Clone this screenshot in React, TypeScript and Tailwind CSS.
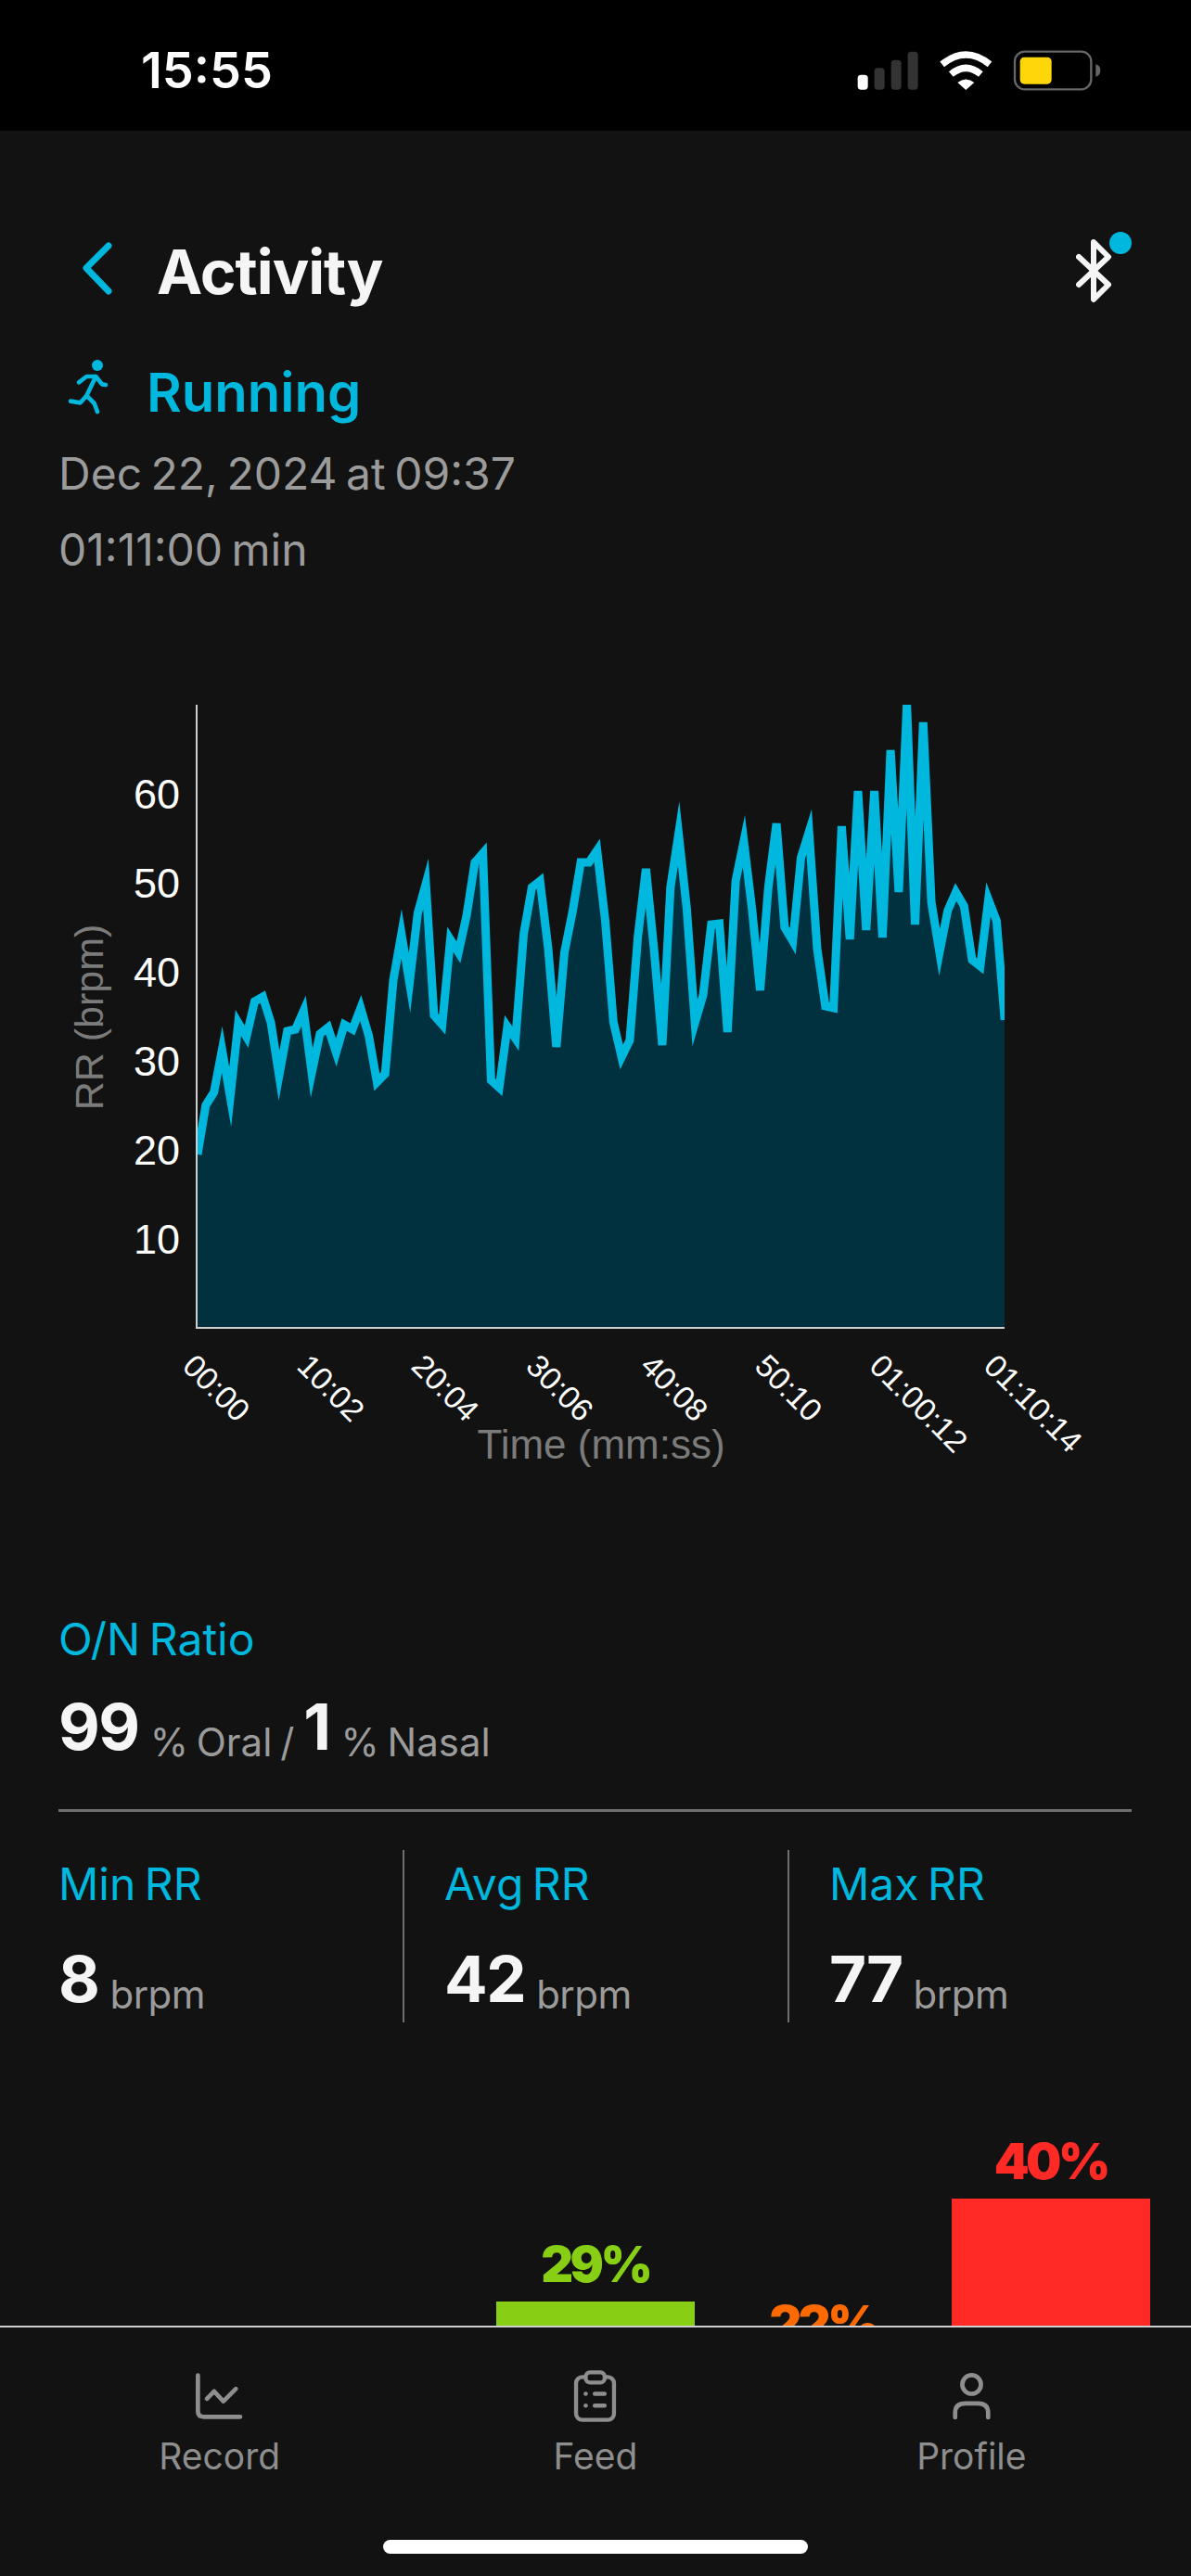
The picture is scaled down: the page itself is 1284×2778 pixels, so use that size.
const L=[1245,1192,1178,1132,1183,1103,1118,1080,1075,1103,1160,1112,1110,1090,1157,1115,1108,1135,1105,1110,1087,1117,1167,1158,1057,1007,1060,985,953,1095,1105,1013,1027,987,930,920,1165,1173,1107,1120,1007,957,950,1023,1129,1027,983,930,930,917,993,1102,1140,1122,1010,937,1025,1127,957,899,980,1103,1073,997,996,1113,950,907,980,1068,957,888,1000,1015,925,897,1023,1085,1087,891,1013,853,1003,853,1011,809,962,760,997,779,973,1027,982,962,977,1035,1042,970,993,1100];
const X0 = 213, DX = 8.79;
const pts = L.map((y, i) => `${(X0 + DX * i).toFixed(1)},${y}`).join(" ");
const ticks = ["00:00", "10:02", "20:04", "30:06", "40:08", "50:10", "01:00:12", "01:10:14"];
const yTicks = [60, 50, 40, 30, 20, 10];

function StatusIcons() {
  return (
    <svg className="w-[265px] h-[44px]" viewBox="130 100 795 132">
      <rect x="135" y="180" width="33" height="48" rx="11" fill="#fff" />
      <rect x="189" y="158" width="33" height="70" rx="11" fill="#333" />
      <rect x="243" y="132" width="33" height="96" rx="11" fill="#333" />
      <rect x="297" y="105" width="33" height="123" rx="11" fill="#333" />
      <path d="M408 146 Q485 84 562 146" fill="none" stroke="#fff" strokeWidth="22" />
      <path d="M437 178 Q485 138 533 178" fill="none" stroke="#fff" strokeWidth="22" />
      <path d="M458 205 Q485 184 512 205 L485 229 Z" fill="#fff" />
      <rect x="643" y="105" width="247" height="122" rx="32" fill="none" stroke="#666" strokeWidth="7" />
      <rect x="660" y="123" width="102" height="87" rx="14" fill="#ffd60a" />
      <path d="M905 146 Q920 150 920 166 Q920 182 905 186 Z" fill="#666" />
    </svg>
  );
}

function Sub({ children }: { children: React.ReactNode }) {
  return <span className="text-[42px] leading-none text-[#9b9b9b] [word-spacing:-3px]">{children}</span>;
}
function Big({ children }: { children: React.ReactNode }) {
  return <span className="text-[69px] leading-[76px] tracking-[-1.5px] font-bold text-[#f5f5f5]">{children}</span>;
}
function Stat({ label, value, cls }: { label: string; value: string; cls: string }) {
  return (
    <div className={cls}>
      <div className="text-[48px] leading-[60px] text-[#00b8de] [word-spacing:-4px]">{label}</div>
      <div className="mt-[34px] flex items-end gap-[12px]">
        <Big>{value}</Big>
        <span className="tracking-[-0.5px]"><Sub>brpm</Sub></span>
      </div>
    </div>
  );
}
function Bar({ label, color, text, h }: { label?: string; color?: string; text?: string; h?: string }) {
  return (
    <div className="w-[213.5px] shrink-0 flex flex-col items-center">
      {label && <div className={`text-[54px] leading-[54px] font-black tracking-[-3.5px] mb-[13px] ${text}`}>{label}</div>}
      {h && <div className={`w-full ${h} ${color}`} />}
    </div>
  );
}
function Tab({ label, children }: { label: string; children: React.ReactNode }) {
  return (
    <div className="flex flex-col items-center">
      {children}
      <div className="mt-[13px] text-[39px] leading-[48px] text-[#8e8e8e]">{label}</div>
    </div>
  );
}

export default function App() {
  return (
    <div className="w-[1284px] h-[2778px] bg-[#121212] flex flex-col overflow-hidden font-['Inter',sans-serif]">
      <div className="h-[141px] shrink-0 bg-black flex items-center justify-between pl-[152px] pr-[96px] pt-[11px]">
        <span className="text-white text-[54px] leading-none font-semibold">15:55</span>
        <StatusIcons />
      </div>

      <main className="flex-1 min-h-0 overflow-hidden pt-[109px]">
        <div className="pl-[63px] pr-[64px]">
          <div className="h-[80px] flex items-center">
            <svg className="w-[40px] h-[68px] ml-[22px]" viewBox="85 265 40 68">
              <path d="M117 274 L93 298 L117 323" fill="none" stroke="#00b8de" strokeWidth="7" strokeLinecap="round" strokeLinejoin="round" />
            </svg>
            <h1 className="ml-[44px] pt-[6px] text-[66px] leading-[80px] font-bold tracking-[-1px] text-[#f5f5f5]">Activity</h1>
            <svg className="ml-auto w-[60px] h-[80px]" viewBox="1160 250 60 80">
              <path d="M1163 277 L1195 307 L1179 323 L1179 261 L1195 277 L1163 307" fill="none" stroke="#f5f5f5" strokeWidth="6" strokeLinecap="round" strokeLinejoin="round" />
              <circle cx="1208" cy="262" r="12" fill="#00b8de" />
            </svg>
          </div>
          <div className="mt-[55px] h-[65px] flex items-start">
            <svg className="ml-[7px] w-[50px] h-[65px]" viewBox="30 405 150 195">
              <circle cx="135" cy="432" r="18" fill="#00b8de" />
              <path d="M75 487 L100 468 L130 468 L150 493 L162 495 M130 468 L100 530 L80 553 L48 548 M100 530 L125 555 L135 582" fill="none" stroke="#00b8de" strokeWidth="14" strokeLinecap="round" strokeLinejoin="round" />
            </svg>
            <div className="ml-[38px] mt-[6px] text-[58px] leading-[65px] font-semibold text-[#00b8de]">Running</div>
          </div>
          <div className="mt-[20px] text-[48px] leading-[82px] text-[#9b9b9b] [word-spacing:-4px]">
            <div>Dec 22, 2024 at 09:37</div>
            <div>01:11:00 min</div>
          </div>
        </div>

        <svg className="block w-[1284px] h-[966px]" viewBox="0 634 1284 966">
          <defs>
            <clipPath id="plot"><rect x="212" y="760" width="871" height="672" /></clipPath>
          </defs>
          <g clipPath="url(#plot)">
            <polygon points={`${X0},1432 ${pts} ${X0 + DX * 99},1432`} fill="#01313f" />
            <polyline points={pts} fill="none" stroke="#00b8de" strokeWidth="9" strokeMiterlimit="9" />
          </g>
          <path d="M212 760 V1432 H1083" fill="none" stroke="#cfcfcf" strokeWidth="2" />
          <g fontFamily="'Liberation Sans', sans-serif">
            {yTicks.map((t, i) => (
              <text key={t} x="194" y={872 + i * 96} textAnchor="end" fontSize="45" fill="#fff">{t}</text>
            ))}
            {ticks.map((t, i) => (
              <text key={t} transform={`translate(${195 + i * 123.4} 1475) rotate(45)`} fontSize="34" fill="#fff">{t}</text>
            ))}
            <text transform="translate(111 1097) rotate(-90)" textAnchor="middle" fontSize="43" fill="#7b7b7b">RR (brpm)</text>
            <text x="648" y="1573" textAnchor="middle" fontSize="44" fill="#7b7b7b">Time (mm:ss)</text>
          </g>
        </svg>

        <div className="pl-[63px] pr-[64px] mt-[138px]">
          <div className="text-[48px] leading-[60px] text-[#00b8de] [word-spacing:-4px]">O/N Ratio</div>
          <div className="mt-[26px] flex items-end">
            <Big>99</Big>
            <span className="ml-[12px] mr-[10px]"><Sub>% Oral /</Sub></span>
            <Big>1</Big>
            <span className="ml-[12px]"><Sub>% Nasal</Sub></span>
          </div>
          <div className="mt-[51px] h-[3px] bg-[#6f6f6f]" />
          <div className="mt-[41px] h-[186px] flex">
            <Stat label="Min RR" value="8" cls="w-[371px] pt-[7px]" />
            <Stat label="Avg RR" value="42" cls="w-[415px] pt-[7px] pl-[43px] border-l-2 border-[#6f6f6f]" />
            <Stat label="Max RR" value="77" cls="flex-1 pt-[7px] pl-[43px] border-l-2 border-[#6f6f6f]" />
          </div>
        </div>

        <div className="ml-[44px] h-[594px] flex items-end gap-[32px]">
          <Bar />
          <Bar />
          <Bar label="29%" text="text-[#87ce14]" color="bg-[#87ce14]" h="h-[293px]" />
          <Bar label="22%" text="text-[#ff6a00]" color="bg-[#ff6a00]" h="h-[229px]" />
          <Bar label="40%" text="text-[#ff2a26]" color="bg-[#ff2a26]" h="h-[404px]" />
        </div>
      </main>

      <nav className="h-[270px] shrink-0 border-t-2 border-[#cfcfcf] bg-[#121212] pt-[45px]">
        <div className="grid grid-cols-3 px-[34px]">
          <Tab label="Record">
            <svg className="w-[57px] h-[57px]" viewBox="60 45 170 170">
              <path d="M76 65 V180 Q76 198 95 198 H212 M105 140 L128 116 L158 148 L198 108" fill="none" stroke="#8e8e8e" strokeWidth="14" strokeLinecap="round" strokeLinejoin="round" />
            </svg>
          </Tab>
          <Tab label="Feed">
            <svg className="w-[57px] h-[57px]" viewBox="41 45 170 170">
              <rect x="65" y="70" width="122" height="138" rx="20" fill="none" stroke="#8e8e8e" strokeWidth="13" />
              <rect x="96" y="55" width="61" height="33" rx="14" fill="#121212" stroke="#8e8e8e" strokeWidth="13" />
              <circle cx="96" cy="124" r="7" fill="#8e8e8e" />
              <circle cx="96" cy="162" r="7" fill="#8e8e8e" />
              <path d="M125 124 H157 M125 162 H157" stroke="#8e8e8e" strokeWidth="13" strokeLinecap="round" />
            </svg>
          </Tab>
          <Tab label="Profile">
            <svg className="w-[57px] h-[57px]" viewBox="83 45 170 170">
              <circle cx="168" cy="94" r="30" fill="none" stroke="#8e8e8e" strokeWidth="14" />
              <path d="M115 200 V185 Q115 155 148 155 H188 Q221 155 221 185 V200" fill="none" stroke="#8e8e8e" strokeWidth="14" strokeLinecap="round" />
            </svg>
          </Tab>
        </div>
        <div className="mt-[66px] mx-auto w-[458px] h-[15px] rounded-full bg-white" />
      </nav>
    </div>
  );
}
